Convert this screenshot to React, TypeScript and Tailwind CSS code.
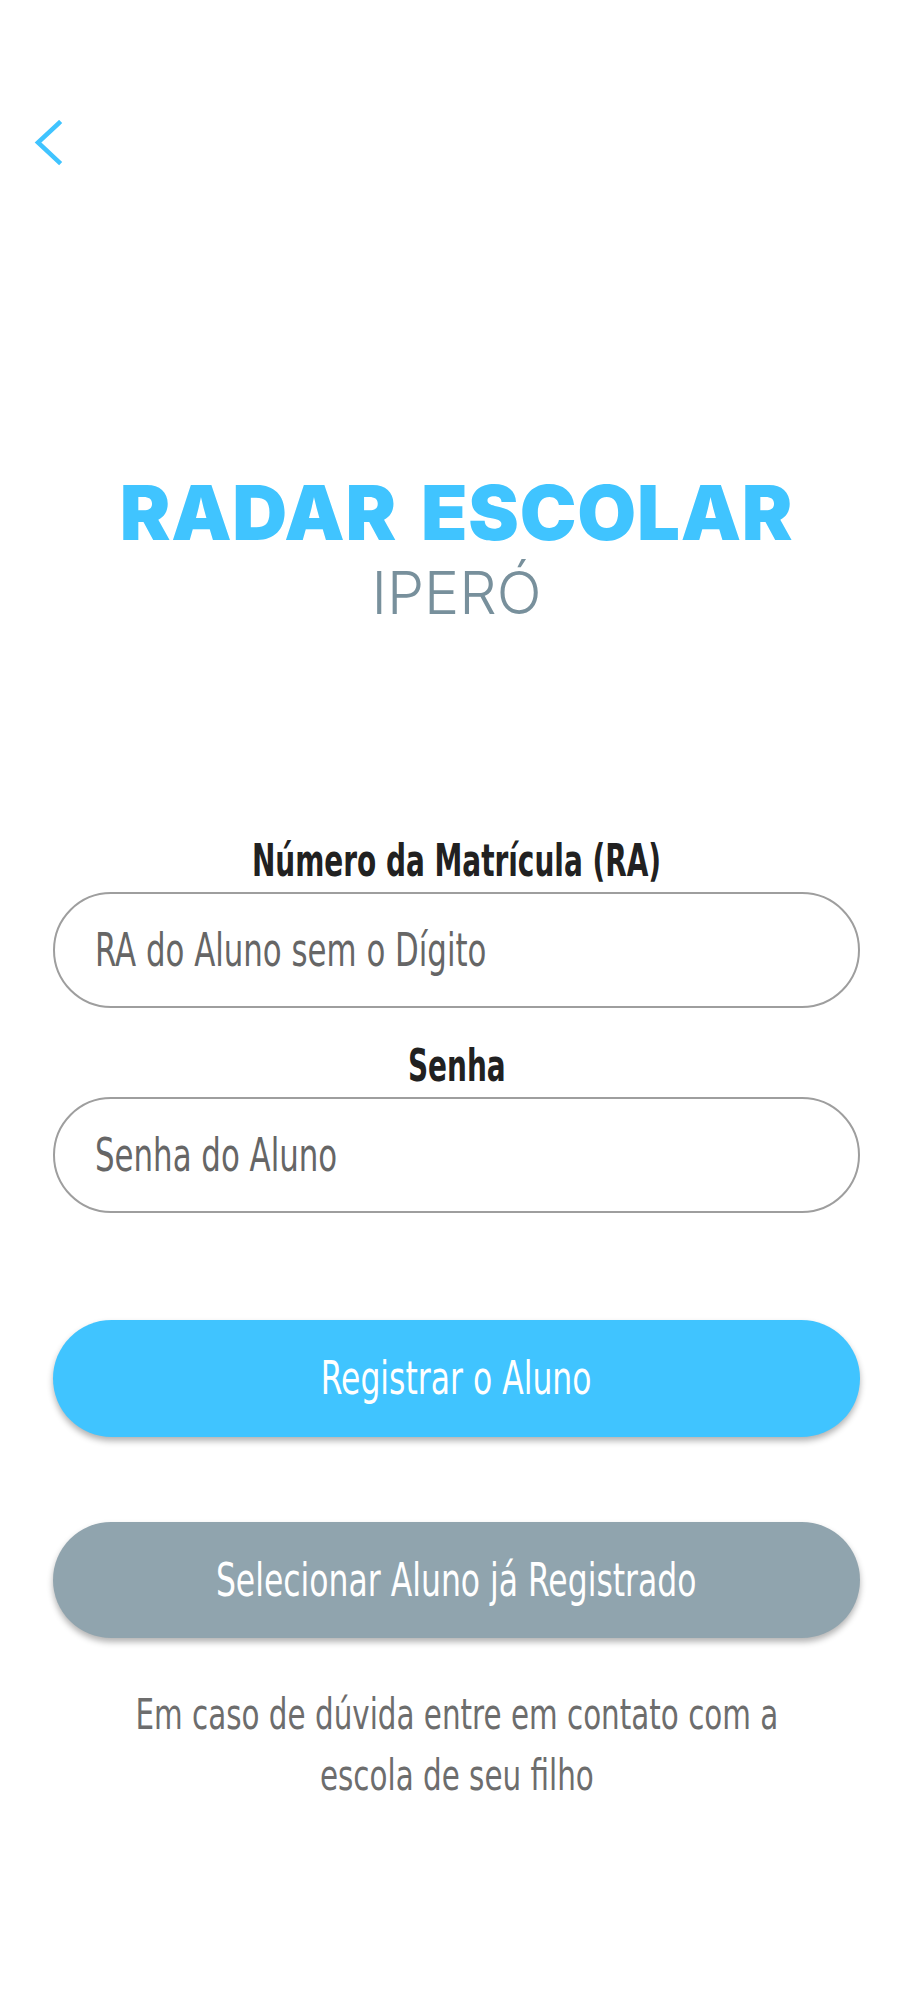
import { useState } from "react";

// DejaVu Sans Condensed squeezed a bit more to get the tall narrow look of the original type
const narrow = "font-['DejaVu_Sans_Condensed','DejaVu_Sans',sans-serif] font-stretch-semi-condensed";

function BackButton() {
    return (
        <button className="block ml-[33px]" aria-label="Voltar">
            <svg className="block" width="30" height="46" viewBox="0 0 30 46" fill="none">
                <polyline points="26,3 5,22.5 26,42" stroke="#40c4ff" strokeWidth="4.5" strokeLinecap="square" />
            </svg>
        </button>
    );
}

function Field({ label, placeholder, type, first }: { label: string; placeholder: string; type: string; first?: boolean }) {
    const [value, setValue] = useState("")

    return (
        <div className={first ? "" : "mt-[36px]"}>
            <div className={`${narrow} text-center text-[45px] leading-[44px] font-bold text-[#212121]`}>
                <span className="inline-block whitespace-nowrap scale-x-[0.69]">{label}</span>
            </div>
            <label className="relative mt-[9px] flex h-[116px] items-center rounded-full border-2 border-[#9e9e9e] pl-[40px] overflow-hidden">
                {value === "" && (
                    <span className={`${narrow} inline-block origin-left whitespace-nowrap scale-x-[0.745] text-[46px] text-[#666666]`}>
                        {placeholder}
                    </span>
                )}
                <input
                    type={type}
                    value={value}
                    onChange={(e) => setValue(e.target.value)}
                    className={`${narrow} absolute inset-0 w-full bg-transparent pl-[40px] pr-[40px] text-[46px] text-[#424242] outline-none`}
                />
            </label>
        </div>
    );
}

export default function App() {
    return (
        <div className="min-h-[2000px] bg-white pt-[120px]">
            <BackButton />

            <div className="pl-[53px] pr-[64px]">
                {/* logo */}
                <div className="mt-[308px] text-center">
                    <div className="font-['Inter',sans-serif] font-black text-[76px] leading-none tracking-[0.01em] [word-spacing:8px] text-[#40c4ff]">
                        RADAR ESCOLAR
                    </div>
                    <div className="mt-[13px] font-['Inter',sans-serif] font-light text-[59px] leading-none text-[#78909c]">
                        IPERÓ
                    </div>
                </div>

                {/* form */}
                <div className="mt-[217px]">
                    <Field first label="Número da Matrícula (RA)" placeholder="RA do Aluno sem o Dígito" type="text" />
                    <Field label="Senha" placeholder="Senha do Aluno" type="password" />
                </div>

                <button className={`${narrow} mt-[107px] flex w-full h-[117px] items-center justify-center rounded-full bg-[#40c4ff] text-white text-[46px] shadow-[0_4px_6px_rgba(0,0,0,0.3)]`}>
                    <span className="inline-block whitespace-nowrap scale-x-[0.76]">Registrar o Aluno</span>
                </button>

                <button className={`${narrow} mt-[85px] flex w-full h-[116px] items-center justify-center rounded-full bg-[#90a4ae] text-white text-[46px] shadow-[0_4px_6px_rgba(0,0,0,0.3)]`}>
                    <span className="inline-block whitespace-nowrap scale-x-[0.76]">Selecionar Aluno já Registrado</span>
                </button>

                <div className="mt-[46px] flex justify-center">
                    <p className={`${narrow} shrink-0 whitespace-nowrap text-center text-[43px] leading-[61px] text-[#6d6d6d] scale-x-[0.76]`}>
                        Em caso de dúvida entre em contato com a
                        <br />
                        escola de seu filho
                    </p>
                </div>
            </div>
        </div>
    );
}
